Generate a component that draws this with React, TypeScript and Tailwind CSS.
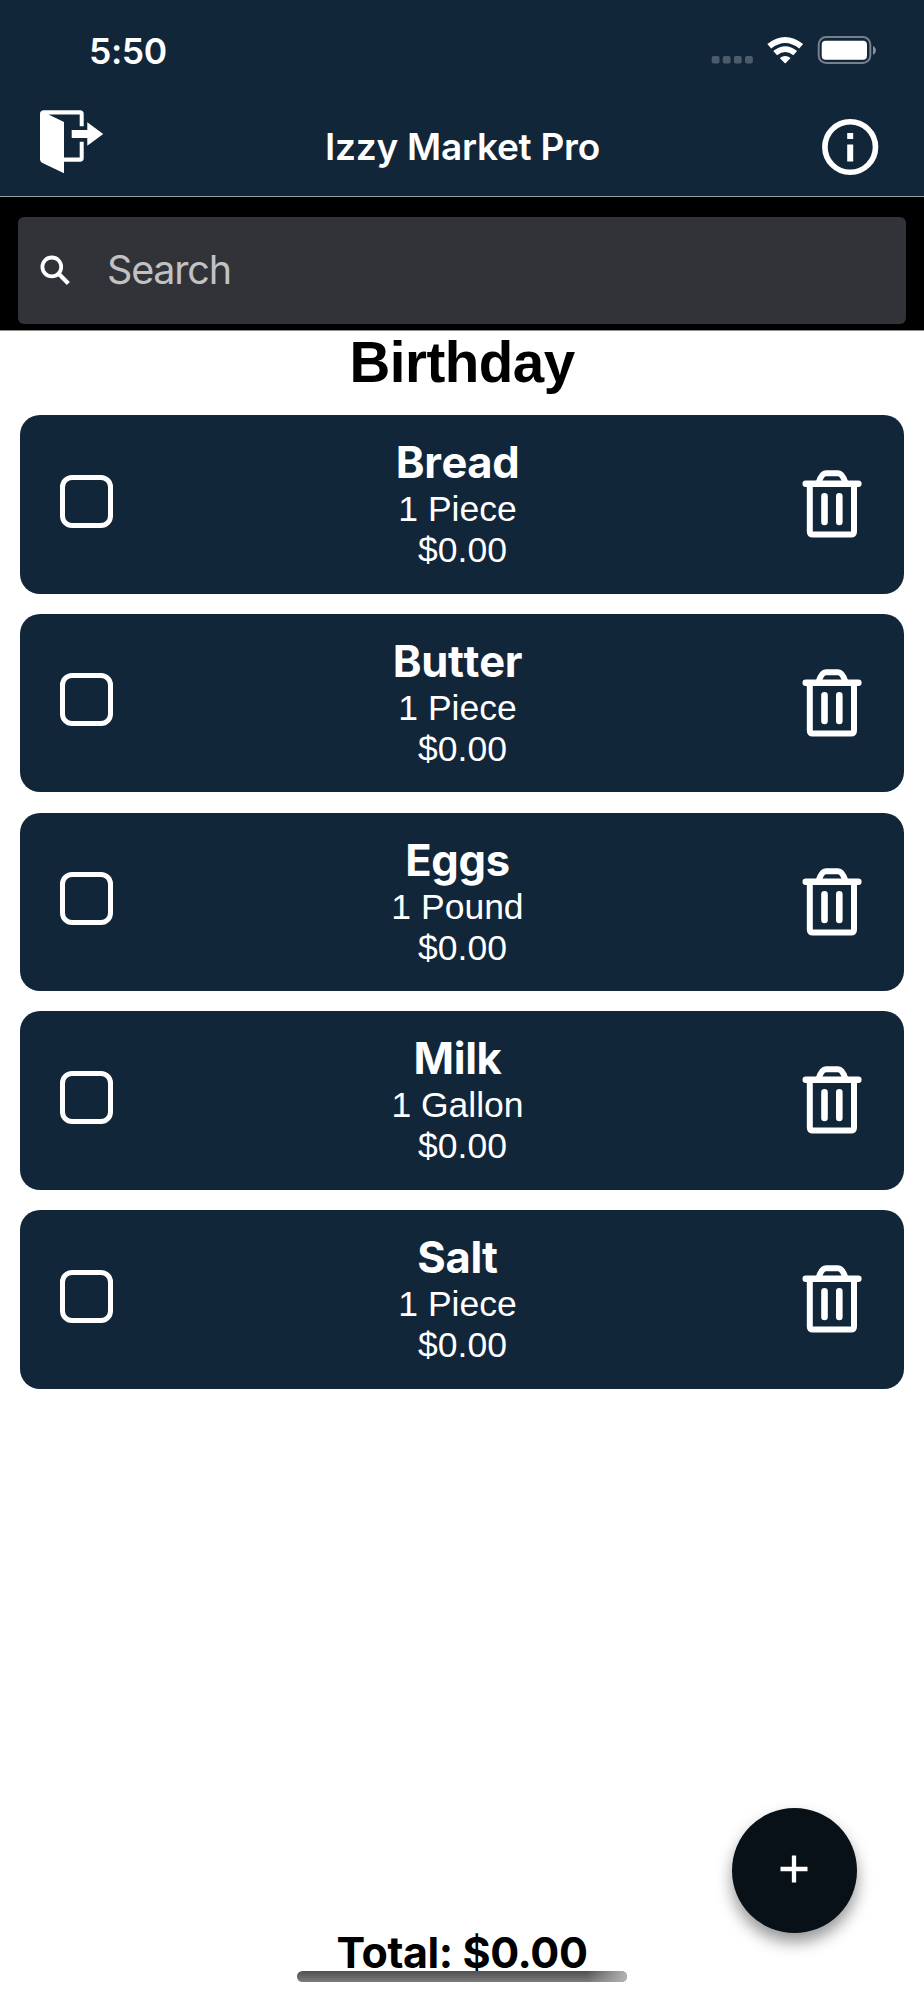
import React from "react";

const items = [
  { name: "Bread", amount: "1 Piece", price: "$0.00" },
  { name: "Butter", amount: "1 Piece", price: "$0.00" },
  { name: "Eggs", amount: "1 Pound", price: "$0.00" },
  { name: "Milk", amount: "1 Gallon", price: "$0.00" },
  { name: "Salt", amount: "1 Piece", price: "$0.00" },
];

function StatusIcons() {
  return (
    <svg width="166" height="30" viewBox="711 36 166 30" fill="none">
      <g fill="#fff" fillOpacity="0.25">
        <rect x="711.7" y="56" width="7.8" height="7.4" rx="2" />
        <rect x="722.8" y="56" width="7.8" height="7.4" rx="2" />
        <rect x="733.9" y="56" width="7.8" height="7.4" rx="2" />
        <rect x="745" y="56" width="7.8" height="7.4" rx="2" />
      </g>
      <g fill="#fff">
        <path d="M767.3 44.1 Q785.2 29.9 803.1 44.1 L799.2 48.6 Q785.2 37.6 771.2 48.6Z" />
        <path d="M773.3 51 Q785.2 41.5 797.1 51 L793.3 55.2 Q785.2 48.9 777.1 55.2Z" />
        <path d="M779.8 57.9 Q785.2 54 790.6 57.9 L785.8 63 Q785.2 63.6 784.6 63Z" />
      </g>
      <rect x="818.7" y="37.1" width="51.6" height="25.8" rx="7.5" stroke="#fff" strokeOpacity="0.42" strokeWidth="2" />
      <rect x="821.7" y="40.8" width="45.3" height="18.9" rx="4" fill="#fff" />
      <path d="M873 46 C876.8 47.5 876.8 53.3 873 54.8Z" fill="#fff" fillOpacity="0.5" />
    </svg>
  );
}

function ExitIcon() {
  return (
    <svg width="64" height="64" viewBox="40 110 64 64" fill="#fff">
      <path d="M44 110.3H80Q83.7 110.3 83.7 114V126.2H79.7V114.5H48.5L64 122V157.5H79.7V141.7H83.7V158Q83.7 161.8 80 161.8H64V173.3L42 162.7Q40 161.5 40 159.5V114Q40 110.3 44 110.3Z" />
      <path d="M71.7 130H87.3V122.3L103.2 134L87.3 145.8V138H71.7Z" />
    </svg>
  );
}

function InfoIcon() {
  return (
    <svg width="58" height="58" viewBox="821 117.500 58 58" fill="#fff">
      <circle cx="850.2" cy="146.500" r="25.300" fill="none" stroke="#fff" strokeWidth="5.600" />
      <rect x="847.2" y="132.500" width="6" height="6" />
      <rect x="847.2" y="144" width="6" height="17" />
    </svg>
  );
}

function SearchIcon() {
  return (
    <svg width="32" height="32" viewBox="40 254 32 32" fill="none" stroke="#fff" strokeWidth="3.800">
      <circle cx="51.800" cy="265.900" r="9.400" />
      <path d="M58.700 272.800L68.300 282.500" strokeWidth="4.200" />
    </svg>
  );
}

function TrashIcon() {
  return (
    <svg width="60" height="68" viewBox="802 470 60 68" fill="none" stroke="#fff" strokeWidth="6">
      <path d="M805.800 483.800H858.300" strokeWidth="6.600" strokeLinecap="round" />
      <path d="M809.800 484V531.500Q809.800 534.500 812.800 534.500H851Q854 534.500 854 531.500V484" />
      <path d="M818.500 483Q821.500 473.200 826 473.200H838Q842.500 473.200 845.500 483" />
      <path d="M824.500 496.300V522M839.300 496.300V522" strokeWidth="6.600" strokeLinecap="round" />
    </svg>
  );
}

export default function App() {
  return (
    <div className="relative flex h-[2000px] w-[924px] flex-col overflow-hidden bg-white font-['Inter',sans-serif]">
      <header className="flex h-[197px] shrink-0 flex-col border-b border-[#9a9fa3] bg-[#12263a] text-white">
        <div className="flex h-[100px] items-start justify-between pl-[89px] pr-[47px] pt-9">
          <span className="pt-px text-[35.500px] leading-[30px] font-[560] tracking-[-0.4px]">5:50</span>
          <StatusIcons />
        </div>
        <div className="flex h-[94px] items-start justify-between pl-10 pr-[45px]">
          <button aria-label="Exit" className="mt-[10px]"><ExitIcon /></button>
          <h1 className="mt-[25px] text-[37px] leading-[44px] font-[580] tracking-[-0.250px] whitespace-nowrap">Izzy Market Pro</h1>
          <button aria-label="Information" className="mt-[17.500px]"><InfoIcon /></button>
        </div>
      </header>

      <div className="h-[134px] shrink-0 border-b border-[#8f8f8f] bg-black px-[18px] pt-[20px]">
        <div className="flex h-[107px] items-center rounded-md bg-[#313338] pl-[22px]">
          <SearchIcon />
          <span className="mb-px ml-[35px] text-[39.500px] leading-[48px] tracking-[-1.200px] text-[#c1c2c3]">Search</span>
        </div>
      </div>

      <main className="flex flex-col px-[20px] font-['Liberation_Sans',Arial,sans-serif]">
        <h2 className="h-[84px] pt-px text-center text-[56.500px] leading-[62px] font-bold tracking-[-0.500px] text-black">Birthday</h2>
        <ul className="flex flex-col gap-[20.250px]">
          {items.map((item) => (
            <li key={item.name} className="flex h-[178.500px] items-start justify-between rounded-[20px] bg-[#12263a] pl-10 pr-[42px] text-white">
              <span role="checkbox" aria-checked="false" aria-label={item.name} className="mt-[59.500px] h-[53px] w-[53px] rounded-[12px] border-[5px] border-white" />
              <div className="flex flex-col items-center pt-[22px] text-[35.500px] leading-[41px]">
                <span className="mb-px font-['Inter',sans-serif] text-[43.500px] leading-[51px] font-bold tracking-[-0.300px] [font-kerning:none] [font-variant-ligatures:none]">{item.name}</span>
                <span>{item.amount}</span>
                <span className="pl-[10px]">{item.price}</span>
              </div>
              <button aria-label="Delete" className="mt-[55px]"><TrashIcon /></button>
            </li>
          ))}
        </ul>
      </main>

      <footer className="mt-auto flex h-[75px] flex-col items-center">
        <p className="text-[43px] leading-[54px] font-bold tracking-[-0.400px] text-black">Total: $0.00</p>
      </footer>
      <div className="absolute top-[1971px] left-[297px] h-[11px] w-[330px] overflow-hidden rounded-full bg-linear-to-b from-[#505050] to-[#7c7c7c]">
        <div className="ml-auto h-full w-10 bg-linear-to-r from-transparent to-[#b4b4b4]" />
      </div>
      <button aria-label="Add item" className="absolute top-[1808px] left-[732px] flex h-[125px] w-[125px] items-center justify-center rounded-full bg-[#081118] shadow-[0_9px_16px_rgba(0,0,0,0.42)]">
        <svg width="28" height="28" viewBox="0 0 28 28" className="mr-[2px] mb-[3px]" stroke="#fff" strokeWidth="4.300">
          <path d="M.500 14H27.500M14 .500V27.500" />
        </svg>
      </button>
    </div>
  );
}
